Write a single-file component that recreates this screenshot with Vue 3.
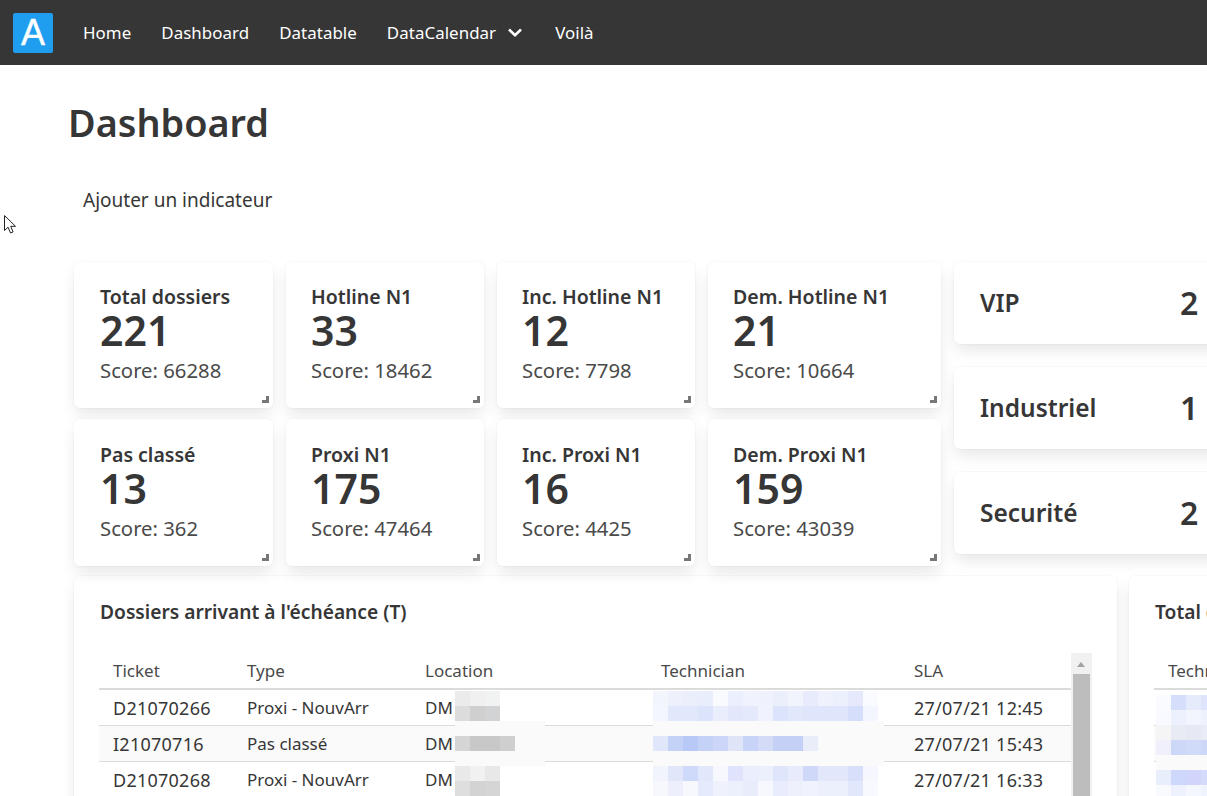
<script setup>
const cards = [
  { label: 'Total dossiers', value: 221, score: 66288, w: 'w1' },
  { label: 'Hotline N1', value: 33, score: 18462, w: 'w2' },
  { label: 'Inc. Hotline N1', value: 12, score: 7798, w: 'w2' },
  { label: 'Dem. Hotline N1', value: 21, score: 10664, w: 'w2' },
  { label: 'Pas classé', value: 13, score: 362, w: 'w1' },
  { label: 'Proxi N1', value: 175, score: 47464, w: 'w2' },
  { label: 'Inc. Proxi N1', value: 16, score: 4425, w: 'w2' },
  { label: 'Dem. Proxi N1', value: 159, score: 43039, w: 'w2' }
]
const side = [
  { label: 'VIP', value: 2 },
  { label: 'Industriel', value: 1 },
  { label: 'Securité', value: 2 }
]
const rows = [
  {
    ticket: 'D21070266', type: 'Proxi - NouvArr', sla: '27/07/21 12:45', band: false, top: 1,
    loc: ['#ebebeb', '#f0f0f0', '#f1f2f2', '#dcdcdc', '#cfcfcf', '#d2d3d4'], locCols: 3,
    tech: ['#f3f5fd','#eef1fc','#ebeffb','#e8eefc','#f9fafd','#eceffd','#f0f3fd','#eff2fd','#ebeffc','#f1f3fd','#e7ebfb','#eff1fc','#eceffc','#e5e9fb','#fafbfe',
           '#f3f6fe','#e2e8fc','#e2e8fc','#dbe4fb','#e9edfc','#e2e7fb','#e4e9fb','#f0f3fd','#dbe4fb','#e2e8fc','#dfe6fb','#dfe6fb','#dfe6fb','#d5dffb','#f3f6fe']
  },
  {
    ticket: 'I21070716', type: 'Pas classé', sla: '27/07/21 15:43', band: true, top: 10,
    loc: ['#d5d5d5', '#c8c8c8', '#c8c8c8', '#cfcfcf'], locCols: 4,
    tech: ['#e1e7fa','#c5d2f8','#b9c9f7','#c5d2f8','#cbd6f8','#e0e4f7','#c8d3f8','#d3dbf7','#c5d0f7','#c5d0f7','#e9ecf9']
  },
  {
    ticket: 'D21070268', type: 'Proxi - NouvArr', sla: '27/07/21 16:33', band: false, top: 4,
    loc: ['#e9e9e9', '#f1f1f1', '#e8e8e8', '#dedede', '#d3d3d3', '#d5d5d5'], locCols: 3,
    tech: ['#f1f3fd','#e2e6fb','#cfdafa','#e1e8fc','#f7f8fd','#dfe3fb','#ebeefc','#eceffc','#dfe6fb','#e7ebfc','#cfd8f9','#e3e7fb','#e3e7fb','#d8dffa','#f5f6fe',
           '#f6f8fe','#eeeffc','#f6f8fe','#e5eafc','#eff2fd','#ecf0fc','#e9ecfb','#f6f8fe','#e8ecfc','#eef0fc','#f0f2fd','#eceffc','#eceffc','#e2e8fb','#f8f9fe']
  }
]
const otherCells = [
  '#fafbff','#d5dffb','#e6ebfc','#dde4fb',
  '#f8faff','#edf1fd','#f2f5fe','#eef2fd',
  '#f5f5f5','#e9ebf4','#e6e8f4','#e9ebf5',
  '#eff0fb','#cdd8f8','#d0daf9','#cdd8f8',
  '#fafafa','#fafafa','#fafafa','#fafafa',
  '#e9eefd','#cdd8fc','#d2d5fb','#d5dcfb',
  '#f9fafe','#edf2fe','#f5f7fe','#eff3fe'
]
</script>

<template>
  <div class="page">
    <nav class="navbar">
      <a class="logo">A</a>
      <a class="nav-item">Home</a>
      <a class="nav-item">Dashboard</a>
      <a class="nav-item">Datatable</a>
      <a class="nav-item">
        DataCalendar
        <svg class="chevron" width="14" height="9" viewBox="0 0 14 9" fill="none" stroke="#fff" stroke-width="2.6">
          <path d="M1 1.5 7 7.2 13 1.5" />
        </svg>
      </a>
      <a class="nav-item">Voilà</a>
    </nav>

    <main class="content">
      <h1 class="title">Dashboard</h1>
      <a class="add">Ajouter un indicateur</a>

      <div class="top">
        <div class="stats">
          <section v-for="c in cards" :key="c.label" class="box stat" :class="c.w">
            <div class="stat-label">{{ c.label }}</div>
            <div class="stat-value">{{ c.value }}</div>
            <div class="stat-score">Score: {{ c.score }}</div>
            <span class="handle"></span>
          </section>
        </div>
        <div class="side">
          <section v-for="s in side" :key="s.label" class="box side-card">
            <span class="side-label">{{ s.label }}</span>
            <span class="side-value">{{ s.value }}</span>
          </section>
        </div>
      </div>

      <div class="bottom">
        <section class="box panel main-panel">
          <h2 class="panel-title">Dossiers arrivant à l'échéance (T)</h2>
          <div class="table-wrap">
            <table class="table">
              <colgroup>
                <col class="c1" /><col class="c2" /><col class="c3" /><col class="c4" /><col class="c5" />
              </colgroup>
              <thead>
                <tr><th>Ticket</th><th>Type</th><th>Location</th><th>Technician</th><th>SLA</th></tr>
              </thead>
              <tbody>
                <tr v-for="r in rows" :key="r.ticket" :class="{ band: r.band }">
                  <td class="num">{{ r.ticket }}</td>
                  <td>{{ r.type }}</td>
                  <td class="cell-blur">
                    DM
                    <span v-if="r.band" class="loc-band"></span>
                    <span class="pix loc" :style="{ top: r.top + 'px', gridTemplateColumns: `repeat(${r.locCols}, 15px)` }">
                      <i v-for="(col, i) in r.loc" :key="i" :style="{ background: col }"></i>
                    </span>
                  </td>
                  <td class="cell-blur">
                    <span v-if="r.band" class="tech-band"></span>
                    <span class="pix tech" :style="{ top: r.top + 'px' }">
                      <i v-for="(col, i) in r.tech" :key="i" :style="{ background: col }"></i>
                    </span>
                  </td>
                  <td class="num">{{ r.sla }}</td>
                </tr>
              </tbody>
            </table>
            <div class="scrollbar">
              <span class="arrow"></span>
              <span class="thumb"></span>
            </div>
          </div>
        </section>

        <section class="box panel other-panel">
          <h2 class="panel-title">Total dossiers</h2>
          <table class="table other-table">
            <thead><tr><th>Technician</th></tr></thead>
            <tbody>
              <tr>
                <td class="cell-blur">
                  <span class="pix other">
                    <i v-for="(col, i) in otherCells" :key="i" :style="{ background: col }"></i>
                  </span>
                </td>
              </tr>
              <tr class="band"><td></td></tr>
              <tr><td></td></tr>
            </tbody>
          </table>
        </section>
      </div>
    </main>

    <svg class="cursor" width="13" height="19" viewBox="0 0 13 19">
      <path d="M.5.5v15l3.6-3.3 2.4 5.8 2.6-1.1-2.4-5.6h4.8z" fill="#fff" stroke="#222" stroke-width="1" />
    </svg>
  </div>
</template>

<style scoped>
.page {
  position: relative;
  width: 1207px;
  height: 796px;
  overflow: hidden;
  background: #fff;
  color: #363636;
  font-family: "Noto Sans", Roboto, sans-serif;
}
.navbar {
  display: flex;
  align-items: center;
  height: 65px;
  background: #363636;
  color: #fff;
  padding-left: 13px;
  box-sizing: border-box;
}
.logo {
  display: flex;
  align-items: center;
  justify-content: center;
  width: 40px;
  height: 40px;
  margin-right: 15px;
  border-radius: 2px;
  background: #1f9ef0;
  color: #fff;
  font-family: "Liberation Sans", sans-serif;
  font-size: 36px;
  line-height: 40px;
  -webkit-text-stroke: 0.4px #fff;
}
.nav-item {
  display: flex;
  align-items: center;
  padding: 0 15px;
  font-size: 16.9px;
  letter-spacing: 0.05px;
  white-space: nowrap;
}
.chevron {
  margin: 0 3px 0 12px;
}
.content {
  padding: 0 0 0 69px;
}
.title {
  margin: 34px 0 0 -1px;
  font-size: 37.8px;
  line-height: 48px;
  font-weight: 600;
}
.add {
  display: block;
  margin: 40px 0 0 14px;
  font-size: 19px;
  line-height: 26px;
  width: max-content;
}
.top {
  display: flex;
  align-items: flex-start;
  gap: 13px;
  margin: 49px 0 0 5px;
  width: 1200px;
}
.box {
  background: #fff;
  border-radius: 6px;
  box-shadow: 0 8px 16px -2px rgba(10, 10, 10, 0.1), 0 0 0 1px rgba(10, 10, 10, 0.02);
  box-sizing: border-box;
}
.stats {
  display: grid;
  grid-template-columns: 199px 198px 198px 233px;
  grid-template-rows: 146px 147px;
  column-gap: 13px;
  row-gap: 11px;
  flex: none;
}
.stat {
  position: relative;
  padding-top: 23px;
}
.stat:nth-child(n + 5) {
  padding-top: 24px;
}
.w1 {
  padding-left: 26px;
}
.w2 {
  padding-left: 25px;
}
.stat-label {
  font-size: 19.5px;
  line-height: 24px;
  font-weight: 600;
  white-space: nowrap;
}
.stat-value {
  font-size: 41px;
  line-height: 43px;
  font-weight: 600;
}
.stat-score {
  margin-top: 5px;
  font-size: 20.3px;
  line-height: 26px;
  color: #4a4a4a;
}
.handle {
  position: absolute;
  right: 4px;
  bottom: 5px;
  width: 4px;
  height: 4px;
  border-right: 3px solid #777;
  border-bottom: 3px solid #777;
}
.side {
  display: flex;
  flex-direction: column;
  gap: 23px;
  flex: none;
  width: 290px;
}
.side-card {
  display: flex;
  align-items: center;
  height: 82px;
  padding: 0 0 2px 26px;
}
.side-label {
  width: 200px;
  font-size: 24.5px;
  font-weight: 600;
}
.side-value {
  font-size: 32px;
  font-weight: 600;
}
.bottom {
  display: flex;
  gap: 12px;
  margin: 10px 0 0 5px;
  width: 1400px;
}
.panel {
  flex: none;
  height: 260px;
  padding: 24px 25px 0 26px;
}
.main-panel {
  width: 1043px;
}
.other-panel {
  width: 240px;
}
.panel-title {
  margin: 0;
  font-size: 19.2px;
  line-height: 24px;
  font-weight: 600;
  white-space: nowrap;
}
.table-wrap {
  display: flex;
  align-items: flex-start;
  margin-top: 29px;
  margin-left: -1px;
}
.table {
  border-collapse: separate;
  border-spacing: 0;
  table-layout: fixed;
  width: 972px;
  flex: none;
  font-size: 17px;
}
.c1 { width: 134px; }
.c2 { width: 178px; }
.c3 { width: 236px; }
.c4 { width: 253px; }
.c5 { width: 171px; }
.table th {
  height: 37px;
  padding: 0 14px;
  box-sizing: border-box;
  text-align: left;
  font-weight: 400;
  border-bottom: 2px solid #dbdbdb;
  color: #4a4a4a;
}
.table td {
  height: 36px;
  padding: 0 14px;
  box-sizing: border-box;
  border-bottom: 1px solid #dbdbdb;
  white-space: nowrap;
}
.table td.num {
  font-size: 18px;
  letter-spacing: 0.25px;
}
.table tr.band td {
  background: #fafafa;
}
.cell-blur {
  position: relative;
}
.pix {
  position: absolute;
  display: grid;
  grid-auto-rows: 15px;
  z-index: 1;
}
.pix i {
  display: block;
}
.loc {
  left: 44px;
}
.tech {
  left: 6px;
  grid-template-columns: repeat(15, 15px);
}
.loc-band {
  position: absolute;
  left: 44px;
  top: -5px;
  width: 90px;
  height: 45px;
  background: #fafafa;
  z-index: 1;
}
.tech-band {
  position: absolute;
  left: 6px;
  top: -5px;
  width: 231px;
  height: 45px;
  background: #fafafa;
  z-index: 1;
}
.scrollbar {
  position: relative;
  flex: none;
  width: 21px;
  height: 200px;
  background: #f1f1f1;
}
.arrow {
  position: absolute;
  left: 6px;
  top: 9px;
  border-left: 4.5px solid transparent;
  border-right: 4.5px solid transparent;
  border-bottom: 5px solid #a3a3a3;
}
.thumb {
  position: absolute;
  left: 2px;
  top: 21px;
  width: 17px;
  height: 170px;
  background: #bdbdbd;
}
.other-table {
  width: 200px;
  margin: 29px 0 0 -1px;
}
.other {
  left: 2px;
  top: 5px;
  grid-template-columns: repeat(4, 15px);
}
.cursor {
  position: absolute;
  left: 4px;
  top: 215px;
}
</style>

<style>
html, body {
  margin: 0;
  overflow: hidden;
}
</style>
